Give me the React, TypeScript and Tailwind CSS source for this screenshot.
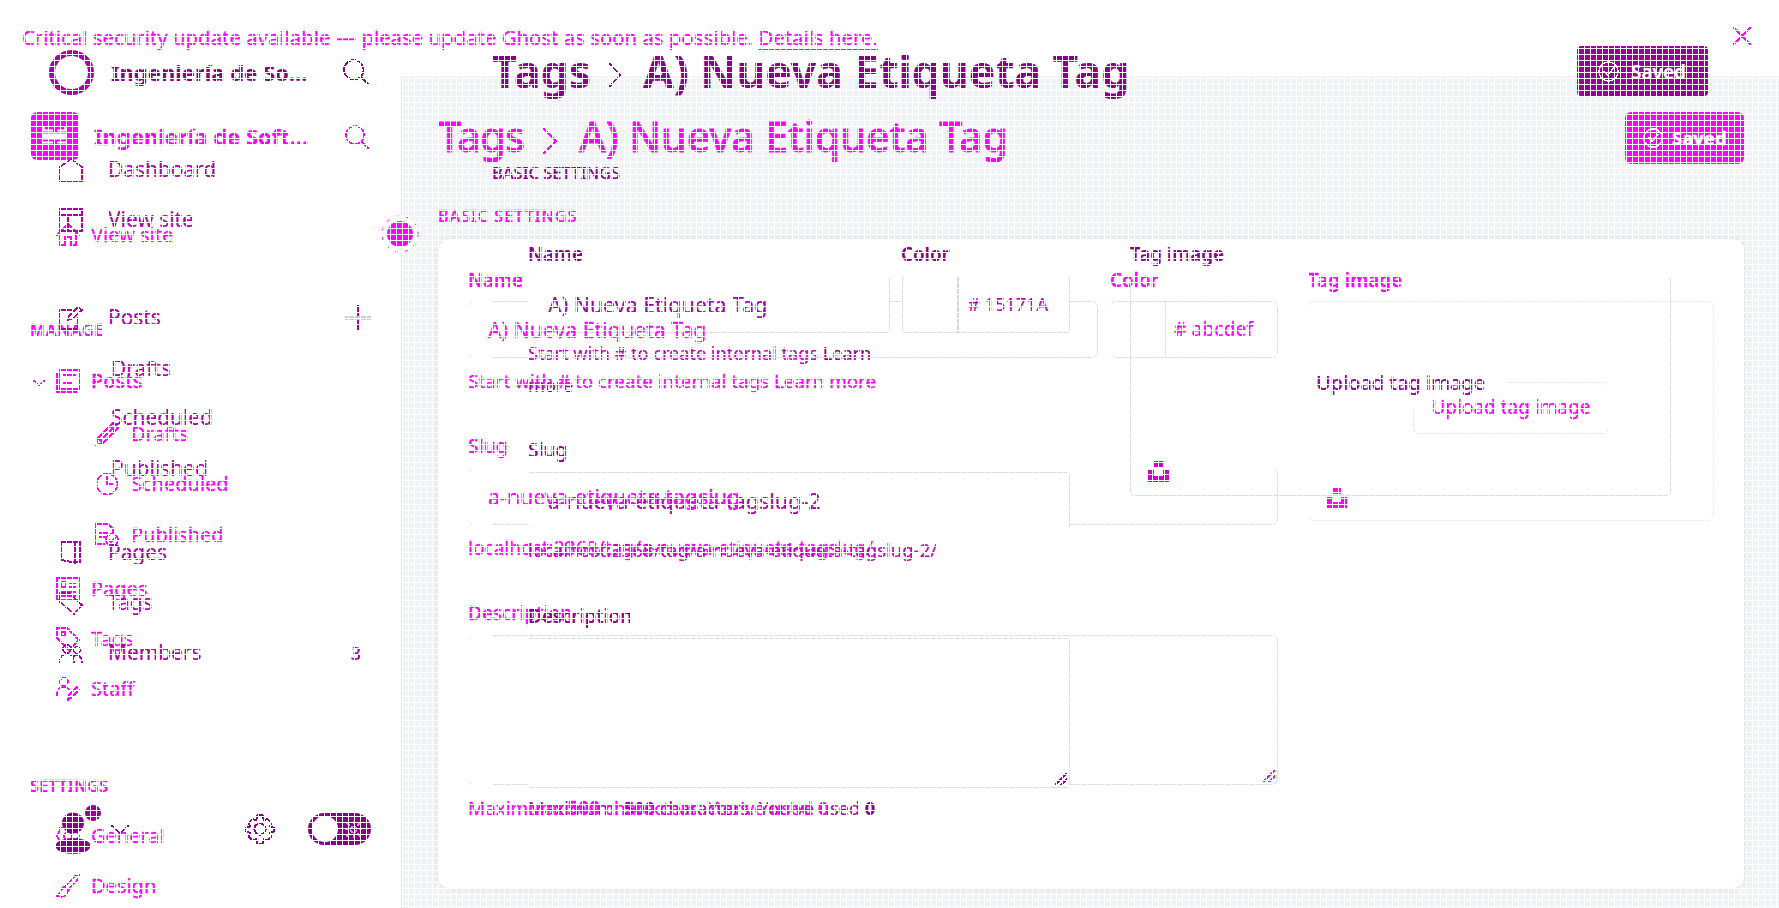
import React from "react";

type Node = React.ReactNode;

const stroke = {
  fill: "none",
  stroke: "currentColor",
  strokeWidth: 1.6,
  strokeLinecap: "round" as const,
  strokeLinejoin: "round" as const,
  shapeRendering: "crispEdges" as const,
};

function Icon({ children, className = "size-6" }: { children: Node; className?: string }) {
  return (
    <svg viewBox="0 0 24 24" className={`shrink-0 ${className}`} {...stroke}>
      {children}
    </svg>
  );
}

const Search = () => (
  <>
    <circle cx="10" cy="10" r="9" />
    <path d="M16.5 16.5 23.5 23.5" />
  </>
);

const Check = () => (
  <>
    <circle cx="12" cy="12" r="11" />
    <path d="m7 12 4 4 7-8" />
  </>
);

const Unsplash = ({ className }: { className: string }) => (
  <svg viewBox="0 0 21 21" className={className} fill="currentColor" shapeRendering="crispEdges">
    <path d="M6 0h9v6H6zM0 9h6v6h9V9h6v12H0z" />
  </svg>
);

const Grip = ({ className }: { className: string }) => (
  <svg viewBox="0 0 12 12" className={className} {...stroke}>
    <path d="M0 12 12 0M6 12 12 6" />
  </svg>
);

function BackRow({ icon, label, className }: { icon: Node; label: string; className: string }) {
  return (
    <div className={`flex shrink-0 items-center pl-14 ${className}`}>
      <Icon>{icon}</Icon>
      <span className="ml-[11px] text-[20px]">{label}</span>
    </div>
  );
}

function BackSubRow({ icon, label, className }: { icon: Node; label: string; className: string }) {
  return (
    <div className={`flex shrink-0 items-center pl-[95px] ${className}`}>
      <Icon>{icon}</Icon>
      <span className="ml-3 text-[20px]">{label}</span>
    </div>
  );
}

function BackSidebar() {
  return (
    <div className="flex h-[832px] w-[401px] shrink-0 flex-col overflow-hidden pt-9">
      <div className="flex h-12 shrink-0 items-center pl-[31px]">
        <svg viewBox="0 0 48 48" className="size-12 shrink-0">
          <rect width="48" height="48" rx="6" fill="#ff00ff" />
          <path d="M12 18.5h10M26 18.5h9M12 30.5h10M26 30.5h9" stroke="#fff" strokeWidth="2" />
          <path d="M13 15v4M34 15v4" stroke="#fff" strokeWidth="1.5" />
          <path d="M12 21.5h23v6H12z" fill="#fff" />
        </svg>
        <span className="ml-[15px] w-[251px] text-[22px] font-bold">Ingeniería de Soft...</span>
        <Icon className="mt-0.5 size-6"><Search /></Icon>
      </div>
      <BackRow className="mt-[50px] h-[50px]" label="View site" icon={<path d="M1 12 12 1l11 11M4 10v12h5v-8h6v8h5V10" />} />
      <div className="mt-[60px] h-5 shrink-0 pl-[30px] text-[16px] font-semibold leading-5 tracking-[0.8px]">MANAGE</div>
      <div className="mt-4 flex h-[50px] shrink-0 items-center pl-[33px]">
        <svg viewBox="0 0 12 6" className="mt-1 h-1.5 w-3" {...stroke}><path d="m1 1 5 4 5-4" /></svg>
        <Icon className="ml-[11px] size-6">
          <path d="M4 1h19v19H4zM1 4v19h19M8 6h11M8 14h8" />
        </Icon>
        <span className="ml-[11px] text-[20px] font-medium">Posts</span>
      </div>
      <BackSubRow className="mt-[3px] h-[50px]" label="Drafts" icon={<path d="m1 23 2-7L18 1l5 5L8 21zM3 16l5 5M15 4l5 5M6 18 18 6" />} />
      <BackSubRow className="h-[50px]" label="Scheduled" icon={<><circle cx="12" cy="12" r="10.5" /><path d="M12 5v7h5" /></>} />
      <BackSubRow className="mt-px h-[50px]" label="Published" icon={<><path d="M9 21H1V1h12l5 5v5M5 10h8M5 14h5" /><circle cx="17" cy="17" r="6" /><path d="m14 17 2 2 4-4" /></>} />
      <BackRow className="mt-1 h-[50px]" label="Pages" icon={<path d="M1 1h22v22H1zM5 5h5v5H5zM14 6h5M14 10h5M5 15h14M5 19h14" />} />
      <BackRow className="h-[49px]" label="Tags" icon={<><path d="M1 2v9l12 12 10-10L11 1H1z" /><rect x="5" y="5" width="4" height="4" /></>} />
      <BackRow className="mt-px h-[50px]" label="Staff" icon={<><circle cx="8" cy="5" r="4" /><path d="M1 18c0-7 3-8 7-8 3 0 4 1 5 3M12 23l1-5 8-8 2 3-8 8z" /></>} />
      <div className="mt-[62px] h-5 shrink-0 pl-[30px] text-[16px] font-semibold leading-5 tracking-[0.4px]">SETTINGS</div>
      <BackRow className="mt-[15px] h-[50px]" label="General" icon={<><path d="M4 4h4l2-2h4l2 2h4l1 4 2 4-2 4-1 4h-4l-2 2h-4l-2-2H4l-1-4-2-4 2-4z" /><circle cx="12" cy="12" r="4" /></>} />
      <BackRow className="h-[50px]" label="Design" icon={<path d="m9 13 10-11 4-1-1 4-10 11zM9 13c-5 0-3 6-8 9 6 2 11 0 11-6" />} />
    </div>
  );
}

const backBox = "rounded-[6px] border border-[#d6e2ea]";
const gap = "relative before:absolute before:-bottom-px before:-top-px before:left-[3px] before:w-5 before:bg-white";

function BackForm() {
  return (
    <div className="mt-[13px] flex h-[649px] shrink-0 gap-[30px] rounded-[12px] bg-white px-[30px] pt-[31px] shadow-[0_0_6px_rgba(60,60,90,0.12)]">
      <div className="flex w-[810px] flex-col text-[18.8px] leading-5">
        <div className="flex h-5 font-semibold">
          <span className="w-[642px]">Name</span>
          <span>Color</span>
        </div>
        <div className="mt-[11px] flex h-[57px] gap-3">
          <div className={`flex w-[630px] items-center pl-[19px] ${backBox} ${gap}`}>
            <span className="relative z-20 text-[21.3px]">A) Nueva Etiqueta Tag</span>
          </div>
          <div className={`flex w-[168px] ${backBox}`}>
            <div className="w-[55px] border-r border-[#d6e2ea]" />
            <span className="mt-[-1px] self-center pl-2 text-[19px] tracking-[0.2px]"># abcdef</span>
          </div>
        </div>
        <p className="relative z-20 mt-[13px] h-5">
          Start with # to create internal tags Learn more
        </p>
        <div className="mt-[45px] h-5 text-[19.2px] font-medium">Slug</div>
        <div className={`mt-3 flex h-[57px] items-center pl-[19px] ${backBox} ${gap}`}>
          <span className="relative z-20 text-[21.4px]">a-nueva-etiqueta-tagslug</span>
        </div>
        <p className="mt-[13px] h-5 text-[19.1px]">localhost:2368/tag/a-nueva-etiqueta-tagslug/</p>
        <div className="mt-[45px] h-5 text-[19px] font-medium">Description</div>
        <div className={`mt-3 flex h-[150px] items-end justify-end p-0.5 ${backBox} ${gap}`}>
          <Grip className="size-3" />
        </div>
        <p className="relative z-20 mt-[13px] h-5 text-[18.9px]">
          Maximum: <b>500</b> characters. You've used 0
        </p>
      </div>
      <div className="w-[406px] text-[18.8px] leading-5">
        <div className="h-5 font-semibold">Tag image</div>
        <div className="relative mt-[11px] flex h-[220px] items-center justify-center rounded-[6px] border border-[#e7eef4]">
          <div className="mt-[-7px] flex h-[52px] w-[196px] items-center justify-center rounded-[6px] border border-[#e4e9ec]">
            <span className="relative z-20 mt-[-2px] text-[19px]">Upload tag image</span>
          </div>
          <Unsplash className="absolute bottom-[12px] left-[18px] size-[20px]" />
        </div>
      </div>
    </div>
  );
}

function BackScreen() {
  return (
    <div className="col-start-1 row-start-1 flex h-[908px] w-[1779px] flex-col overflow-hidden text-[#ff00ff] [-webkit-text-stroke:0.3px_currentColor]">
      <div className="flex h-[76px] shrink-0 items-center justify-between pl-[22px] pr-[28px]">
        <span className="mt-[-2px] text-[20.35px]">
          Critical security update available — please update Ghost as soon as possible.{" "}
          <span className="underline underline-offset-[3px]">Details here.</span>
        </span>
        <Icon className="mt-[-4px] size-[18px] stroke-2"><path d="m1 1 22 22M23 1 1 23" /></Icon>
      </div>
      <div className="flex h-[832px]">
        <BackSidebar />
        <main className="flex flex-1 flex-col overflow-hidden border-l border-[#e1e3e8] bg-[#f1f2f6] pl-9 pr-[35px] pt-9">
          <div className="flex h-[52px] shrink-0 items-center">
            <h1 className="mt-[-3px] flex items-center text-[41px] font-medium [-webkit-text-stroke:0.8px_currentColor]">
              <span className="w-[105px] tracking-[-0.5px]">Tags</span>
              <svg viewBox="0 0 14 26" className="mt-2 h-[26px] w-[14px]" {...stroke}><path d="m1 1 12 12L1 25" /></svg>
              <span className="ml-[22px]">A) Nueva Etiqueta Tag</span>
            </h1>
            <div className="ml-auto flex h-[52px] w-[119px] items-center rounded-[6px] bg-[#ff00ff] pl-[18px] text-white">
              <Icon className="size-5 stroke-2"><Check /></Icon>
              <span className="ml-[9px] text-[18.5px] font-bold">Saved</span>
            </div>
          </div>
          <div className="mt-[42px] h-5 shrink-0 text-[16px] font-medium leading-5 tracking-[1.1px]">BASIC SETTINGS</div>
          <BackForm />
        </main>
      </div>
    </div>
  );
}

function FrontRow({ icon, label, className, end }: { icon?: Node; label: string; className: string; end?: Node }) {
  return (
    <div className={`flex shrink-0 items-center pl-[59px] text-[20.9px] text-[#aa00aa] ${className}`}>
      {icon ? <Icon className="mr-[25px] size-6">{icon}</Icon> : <span className="w-[52px]" />}
      <span className="flex-1">{label}</span>
      {end}
    </div>
  );
}

function FrontSidebar() {
  return (
    <div className="flex w-[401px] shrink-0 flex-col pr-[30px] pt-[47px] text-[#880088]">
      <div className="flex h-[50px] shrink-0 items-center pl-[49px]">
        <div className="size-[45px] shrink-0 rounded-full border-[6px] border-[#aa00aa]" />
        <span className="ml-[17px] flex-1 text-[22px] font-bold">Ingeniería de So...</span>
        <Icon className="mr-[2px] size-[26px]"><Search /></Icon>
      </div>
      <FrontRow className="mt-12 h-[50px]" label="Dashboard" icon={<path d="M1 23V9l11-8 11 8v14z" />} />
      <FrontRow className="h-[49px]" label="View site" icon={<><path d="M1 1h22v22H1z" /><path d="M1 7h22M9 7v16" /></>} />
      <FrontRow
        className="mt-[49px] h-[49px]"
        label="Posts"
        icon={<path d="M12 4H1v19h18V12M9 14l1-4 9-9 4 3-10 9z" />}
        end={<Icon className="size-[26px]"><path d="M12 0v24" /><path d="M0 12h24" stroke="#cccccc" strokeWidth="3" /></Icon>}
      />
      <FrontRow className="mt-0.5 h-[49px]" label="Drafts" />
      <FrontRow className="h-[49px]" label="Scheduled" />
      <FrontRow className="mt-0.5 h-[49px]" label="Published" />
      <FrontRow className="mt-[35px] h-[49px]" label="Pages" icon={<path d="M2 1h19v20H13L2 19zM16 3v19" strokeWidth="2" />} />
      <FrontRow className="mt-px h-[49px]" label="Tags" icon={<path d="M1 2h9l13 12-8 9L1 11z" />} />
      <FrontRow
        className="mt-px h-[50px]"
        label="Members"
        icon={<><circle cx="8" cy="8" r="4" /><circle cx="18" cy="9" r="3.5" /><path d="M1 21c0-6 3-8 7-8s7 2 7 8M15 15c4-2 8 1 8 6" /></>}
        end={<span className="mr-[10px] text-[18px] font-medium">3</span>}
      />
      <div className="mt-[126px] flex h-[50px] shrink-0 items-center pl-14">
        <svg viewBox="0 0 46 50" className="h-[50px] w-[46px]" fill="currentColor">
          <ellipse cx="17" cy="19" rx="11" ry="10.5" />
          <ellipse cx="17" cy="42" rx="17.5" ry="8" />
          <circle cx="37" cy="9" r="8" fill="#990099" />
        </svg>
        <svg viewBox="0 0 18 9" className="ml-[9px] h-[9px] w-[18px]" {...stroke}><path d="m1 1 8 7 8-7" /></svg>
        <Icon className="ml-[116px] size-[30px]">
          <path d="M10 1h4l1 4 3-1 3 3-1 3 3 1v3l-3 1 1 3-3 3-3-1-1 4h-4l-1-4-3 1-3-3 1-3-3-1v-3l3-1-1-3 3-3 3 1z" />
          <circle cx="12" cy="12" r="4.5" />
        </Icon>
        <div className="ml-[33px] flex h-8 w-[63px] items-center justify-between rounded-full bg-[#880088] pl-1 pr-[9px]">
          <div className="size-[26px] rounded-full bg-white" />
          <svg viewBox="0 0 17 17" className="size-[17px] text-[#dd88dd]" {...stroke}>
            <circle cx="8.5" cy="8.5" r="3" />
            <path d="M8.5 0v2M8.5 15v2M0 8.5h2M15 8.5h2M2 2l2 2M13 13l2 2M2 15l2-2M13 4l2-2" />
          </svg>
        </div>
      </div>
    </div>
  );
}

const frontBox = "rounded-[3px] border border-[#dcdcdc]";

function FrontForm() {
  return (
    <div className="mt-[61px] flex gap-[60px] pl-9">
      <div className="flex w-[542px] flex-col text-[18.8px] leading-5 text-[#8b008b]">
        <div className="flex h-5 font-semibold">
          <span className="w-[373px]">Name</span>
          <span>Color</span>
        </div>
        <div className="mt-3 flex h-[57px] gap-3">
          <div className={`relative z-10 flex w-[362px] items-center bg-white pl-[19px] ${frontBox}`}>
            <span className="text-[21.4px] text-[#a000b0]">A) Nueva Etiqueta Tag</span>
          </div>
          <div className={`relative z-10 flex w-[168px] bg-white ${frontBox}`}>
            <div className="w-14 border-r-2 border-[#d8d8d8]" />
            <span className="mt-[-1px] self-center pl-[9px] text-[18.2px] text-[#bb00bb]"># 15171A</span>
          </div>
        </div>
        <p className="mt-1 h-16 text-[18.1px] leading-8 text-[#bb00bb]">
          Start with # to create internal tags <span className="text-[#8b008b]">Learn</span>
          <br />
          <span className="text-[#8b008b]">more</span>
        </p>
        <div className="mt-[39px] h-5 text-[19px] font-medium">Slug</div>
        <div className={`relative z-10 mt-3 flex h-[57px] items-center bg-white pl-[19px] ${frontBox}`}>
          <span className="text-[21.5px] text-[#a800a8]">a-nueva-etiqueta-tagslug-2</span>
        </div>
        <p className="mt-[11px] h-5 whitespace-nowrap text-[18.5px] text-[#bb00bb]">
          localhost:2368/tag/a-nueva-etiqueta-tagslug-2/
        </p>
        <div className="mt-[46px] h-5 text-[19px] font-medium">Description</div>
        <div className={`relative z-10 mt-3 flex h-[150px] items-end justify-end bg-white p-0.5 ${frontBox}`}>
          <Grip className="size-3" />
        </div>
        <p className="mt-[10px] h-5 text-[18.2px] text-[#aa00aa]">
          Maximum: <b>500</b> characters. You've used <b className="text-[#8b008b]">0</b>
        </p>
      </div>
      <div className="w-[541px] text-[18.8px] leading-5 text-[#8b008b]">
        <div className="h-5 font-semibold">Tag image</div>
        <div className="relative mt-3 h-[220px] rounded-[5px] border border-[#dcdcdc] pt-[79px]">
          <div className="relative z-10 mx-auto flex h-[54px] w-[214px] items-center justify-center bg-white">
            <span className="text-[19.9px] font-medium text-[#9900a0]">Upload tag image</span>
          </div>
          <Unsplash className="absolute bottom-[13px] left-[17px] size-[21px] text-[#cc00cc]" />
        </div>
      </div>
    </div>
  );
}

function FrontScreen() {
  return (
    <div className="col-start-1 row-start-1 flex h-[908px] w-[1779px] overflow-hidden [-webkit-text-stroke:0.2px_currentColor]">
      <FrontSidebar />
      <main className="flex-1 pl-[91px] pr-[71px] pt-[46px] text-[#8b008b]">
        <div className="flex h-[50px] items-center">
          <h1 className="flex items-center text-[44.4px] font-bold">
            <span className="w-[117px]">Tags</span>
            <svg viewBox="0 0 12 24" className="mt-2 h-6 w-3" {...stroke}><path d="m1 1 10 11L1 23" /></svg>
            <span className="ml-[22px]">A) Nueva Etiqueta Tag</span>
          </h1>
          <div className="ml-auto flex h-[50px] w-[131px] items-center rounded-[4px] bg-[#990099] pl-[21px] text-white">
            <Icon className="size-[21px]"><Check /></Icon>
            <span className="ml-3 mt-0.5 text-[19px] font-semibold">Saved</span>
          </div>
        </div>
        <div className="mt-[67px] h-5 text-[16.5px] font-medium leading-5">BASIC SETTINGS</div>
        <FrontForm />
      </main>
    </div>
  );
}

export default function App() {
  return (
    <div className="relative grid h-[908px] w-[1779px] overflow-hidden whitespace-nowrap bg-white font-['Noto_Sans',sans-serif]">
      <BackScreen />
      <FrontScreen />
      <svg viewBox="0 0 38 38" className="absolute left-[381px] top-[215px] size-[38px]">
        <circle cx="19" cy="19" r="18" fill="#fff" stroke="#ff00ff" strokeDasharray="3 7" />
        <circle cx="19" cy="19" r="13" fill="#ff00ff" />
      </svg>
      <div className="pointer-events-none absolute inset-0 z-30 bg-[linear-gradient(to_right,#fff_1px,transparent_1px),linear-gradient(#fff_1px,transparent_1px)] bg-[size:6px_6px]" />
    </div>
  );
}
